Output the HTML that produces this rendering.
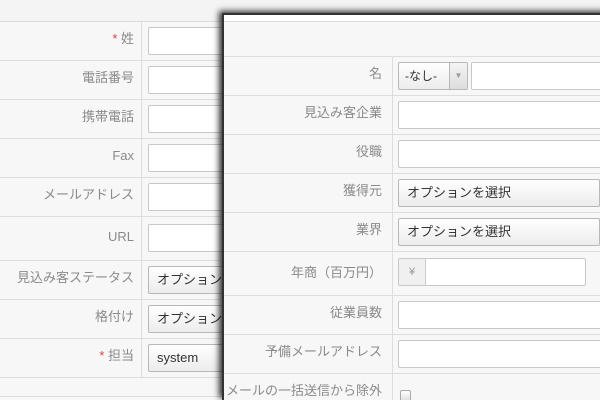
<!DOCTYPE html><html><head><meta charset="utf-8"><style>
*{margin:0;padding:0;box-sizing:border-box}
html,body{width:600px;height:400px;overflow:hidden}
body{background:#f4f4f4;position:relative;font-family:"Liberation Sans","Noto Sans CJK JP",sans-serif;font-size:13px;color:#8a8a8a}
.a{position:absolute}
.hl{position:absolute;height:1px;background:#ddd}
.lb{position:absolute;text-align:right;line-height:16px;white-space:nowrap}
.in{position:absolute;background:#fff;border:1px solid #c8c8c8;border-radius:2px;height:28px}
.sel{position:absolute;border:1px solid #b8b8b8;border-radius:2px;height:28px;background:linear-gradient(#fff,#ececec);color:#333;padding-left:8px;line-height:26px;font-size:13px;white-space:nowrap;overflow:hidden}
.r{color:#e04040}
</style></head><body>
<div class="a" style="left:0;top:21px;width:600px;height:379px;background:#f7f7f7"></div>
<div class="a" style="left:141px;top:21px;width:1px;height:356px;background:#ddd"></div>
<div class="hl" style="left:0;top:21px;width:230px"></div>
<div class="hl" style="left:0;top:60px;width:230px"></div>
<div class="hl" style="left:0;top:99px;width:230px"></div>
<div class="hl" style="left:0;top:138px;width:230px"></div>
<div class="hl" style="left:0;top:177px;width:230px"></div>
<div class="hl" style="left:0;top:216px;width:230px"></div>
<div class="hl" style="left:0;top:260px;width:230px"></div>
<div class="hl" style="left:0;top:299px;width:230px"></div>
<div class="hl" style="left:0;top:338px;width:230px"></div>
<div class="hl" style="left:0;top:377px;width:230px"></div>
<div class="hl" style="left:0;top:396px;width:230px"></div>
<div class="lb" style="right:466px;top:31px"><span class="r">*</span> 姓</div>
<div class="lb" style="right:466px;top:70px">電話番号</div>
<div class="lb" style="right:466px;top:109px">携帯電話</div>
<div class="lb" style="right:466px;top:148px">Fax</div>
<div class="lb" style="right:466px;top:187px">メールアドレス</div>
<div class="lb" style="right:466px;top:229px">URL</div>
<div class="lb" style="right:466px;top:270px">見込み客ステータス</div>
<div class="lb" style="right:466px;top:309px">格付け</div>
<div class="lb" style="right:466px;top:348px"><span class="r">*</span> 担当</div>
<div class="in" style="left:148px;top:27px;width:100px"></div>
<div class="in" style="left:148px;top:66px;width:100px"></div>
<div class="in" style="left:148px;top:105px;width:100px"></div>
<div class="in" style="left:148px;top:144px;width:100px"></div>
<div class="in" style="left:148px;top:183px;width:100px"></div>
<div class="in" style="left:148px;top:224px;width:100px"></div>
<div class="sel" style="left:148px;top:266px;width:100px">オプションを選択</div>
<div class="sel" style="left:148px;top:305px;width:100px">オプションを選択</div>
<div class="sel" style="left:148px;top:344px;width:100px">system</div>
<div class="a" style="left:222px;top:13px;width:390px;height:387px;background:#f7f7f7;border-left:2px solid #333;border-top:2px solid #333;box-shadow:-3px -2px 6px rgba(0,0,0,.8);overflow:hidden">
<div class="a" style="left:0;top:0;width:400px;height:6px;background:#fff"></div>
<div class="hl" style="left:0;top:6px;width:400px"></div>
<div class="a" style="left:168px;top:41px;width:1px;height:400px;background:#ddd"></div>
<div class="hl" style="left:0;top:41px;width:400px"></div>
<div class="hl" style="left:0;top:80px;width:400px"></div>
<div class="hl" style="left:0;top:119px;width:400px"></div>
<div class="hl" style="left:0;top:158px;width:400px"></div>
<div class="hl" style="left:0;top:197px;width:400px"></div>
<div class="hl" style="left:0;top:236px;width:400px"></div>
<div class="hl" style="left:0;top:280px;width:400px"></div>
<div class="hl" style="left:0;top:319px;width:400px"></div>
<div class="hl" style="left:0;top:358px;width:400px"></div>
<div class="lb" style="right:230px;top:51px">名</div>
<div class="lb" style="right:230px;top:90px">見込み客企業</div>
<div class="lb" style="right:230px;top:129px">役職</div>
<div class="lb" style="right:230px;top:168px">獲得元</div>
<div class="lb" style="right:230px;top:207px">業界</div>
<div class="lb" style="right:230px;top:250px">年商（百万円）</div>
<div class="lb" style="right:230px;top:290px">従業員数</div>
<div class="lb" style="right:230px;top:329px">予備メールアドレス</div>
<div class="lb" style="right:230px;top:368px">メールの一括送信から除外</div>
<div class="sel" style="left:174px;top:47px;width:70px;font-size:12px;padding-left:6px">-なし-<span class="a" style="right:0;top:0;width:18px;height:26px;border-left:1px solid #b8b8b8;background:linear-gradient(#f4f4f4,#ddd);text-align:center;color:#999;font-size:8px">▼</span></div>
<div class="in" style="left:247px;top:47px;width:150px"></div>
<div class="in" style="left:174px;top:86px;width:220px"></div>
<div class="in" style="left:174px;top:125px;width:220px"></div>
<div class="sel" style="left:174px;top:164px;width:202px">オプションを選択</div>
<div class="sel" style="left:174px;top:203px;width:202px">オプションを選択</div>
<div class="in" style="left:174px;top:243px;width:188px"><div class="a" style="left:0;top:0;width:27px;height:26px;background:#f0f0f0;border-right:1px solid #ccc;text-align:center;line-height:26px;font-size:11px;color:#999">¥</div></div>
<div class="in" style="left:174px;top:286px;width:220px"></div>
<div class="in" style="left:174px;top:325px;width:220px"></div>
<div class="a" style="left:176px;top:375px;width:11px;height:12px;border:1px solid #aaa;border-radius:2px;background:linear-gradient(#fff,#ddd)"></div>
</div>
</body></html>
